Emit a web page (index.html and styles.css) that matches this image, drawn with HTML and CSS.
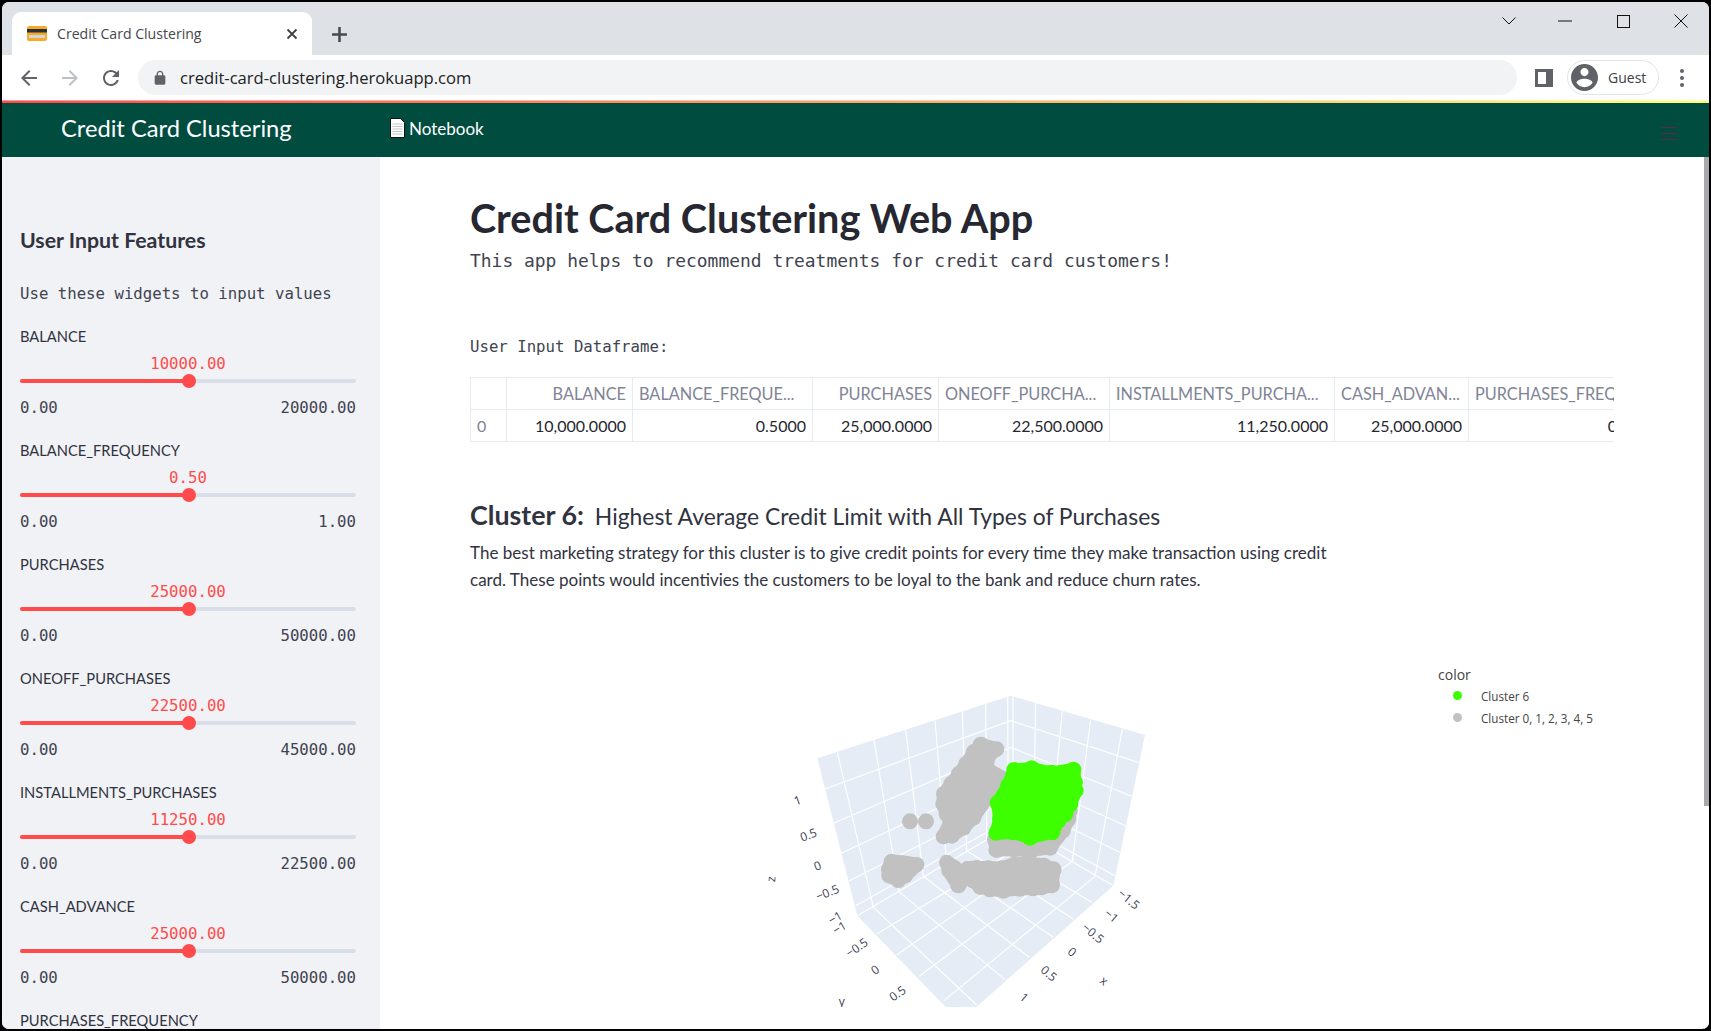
FILE: index.html
```html
<!DOCTYPE html>
<html lang="en">
<head>
<meta charset="utf-8">
<title>Credit Card Clustering</title>
<link rel="stylesheet" href="styles.css">
</head>
<body>
<div class="window">
  <div class="tabstrip">
    <div class="tab">
      <svg class="favicon" viewBox="0 0 20 15"><rect width="20" height="15" rx="2" fill="#f9a825"/><rect y="3" width="20" height="3.5" fill="#263238"/><rect x="2" y="9" width="16" height="3" fill="#cfd8dc"/></svg>
      <span class="tab-title">Credit Card Clustering</span>
      <svg class="tab-close" viewBox="0 0 12 12"><path d="M1.5 1.5l9 9M10.5 1.5l-9 9"/></svg>
    </div>
    <svg class="newtab" viewBox="0 0 16 16"><path d="M8 1v14M1 8h14"/></svg>
    <div class="win-controls">
      <div class="win-btn chev"><svg viewBox="0 0 14 8" width="14" height="8"><path d="M.5.5L7 7 13.5.5"/></svg></div>
      <div class="win-btn"><svg viewBox="0 0 14 2" width="14" height="2"><path d="M0 1h14"/></svg></div>
      <div class="win-btn"><svg viewBox="0 0 13 13" width="13" height="13"><rect x=".5" y=".5" width="12" height="12"/></svg></div>
      <div class="win-btn"><svg viewBox="0 0 14 14" width="14" height="14"><path d="M.5.5l13 13M13.5.5l-13 13"/></svg></div>
    </div>
  </div>

  <div class="toolbar">
    <svg class="nav-icon" viewBox="0 0 24 24"><path d="M20 11H7.83l5.59-5.59L12 4l-8 8 8 8 1.41-1.41L7.83 13H20v-2z"/></svg>
    <svg class="nav-icon nav-off" viewBox="0 0 24 24"><path d="M4 11h12.17l-5.59-5.59L12 4l8 8-8 8-1.41-1.41L16.17 13H4v-2z"/></svg>
    <svg class="nav-icon" viewBox="0 0 24 24"><path d="M17.65 6.35C16.2 4.9 14.21 4 12 4c-4.42 0-7.99 3.58-7.99 8s3.57 8 7.99 8c3.73 0 6.84-2.55 7.73-6h-2.08c-.82 2.33-3.04 4-5.65 4-3.31 0-6-2.69-6-6s2.69-6 6-6c1.66 0 3.14.69 4.22 1.78L13 11h7V4l-2.35 2.35z"/></svg>
    <div class="omnibox">
      <svg class="lock" viewBox="0 0 24 24"><path d="M18 8h-1V6c0-2.76-2.24-5-5-5S7 3.24 7 6v2H6c-1.1 0-2 .9-2 2v10c0 1.1.9 2 2 2h12c1.1 0 2-.9 2-2V10c0-1.1-.9-2-2-2zm-9-2c0-1.66 1.34-3 3-3s3 1.34 3 3v2H9V6z"/></svg>
      <span class="url">credit-card-clustering.herokuapp.com</span>
    </div>
    <svg class="side-icon" viewBox="0 0 18 18"><path fill-rule="evenodd" d="M0 0h18v18H0zM3 3v12h8V3z"/></svg>
    <div class="profile">
      <svg class="avatar" viewBox="2 2 20 20"><path d="M12 2C6.48 2 2 6.48 2 12s4.48 10 10 10 10-4.48 10-10S17.52 2 12 2zm0 3c1.66 0 3 1.34 3 3s-1.34 3-3 3-3-1.34-3-3 1.34-3 3-3zm0 14.2c-2.5 0-4.71-1.28-6-3.22.03-1.99 4-3.08 6-3.08 1.99 0 5.97 1.09 6 3.08-1.29 1.94-3.5 3.22-6 3.22z"/></svg>
      <span class="guest">Guest</span>
    </div>
    <svg class="kebab" viewBox="0 0 4 18"><circle cx="2" cy="2" r="2"/><circle cx="2" cy="9" r="2"/><circle cx="2" cy="16" r="2"/></svg>
  </div>

  <div class="stripe"></div>

  <nav class="navbar">
    <span class="brand">Credit Card Clustering</span>
    <a class="nav-link">
      <svg class="doc-icon" viewBox="0 0 15 20"><path d="M.5.5h10l4 4v15H.5z" fill="#fff" stroke="#111"/><path d="M2.5 6h10M2.5 8.5h10M2.5 11h10M2.5 13.5h10M2.5 16h10" stroke="#c4c4c4"/></svg>
      Notebook
    </a>
    <svg class="burger" viewBox="0 0 16 15"><path d="M0 1.5h16M0 7.5h16M0 13.5h16"/></svg>
  </nav>

  <div class="app">
    <aside class="sidebar">
      <h3 class="side-title">User Input Features</h3>
      <p class="side-note">Use these widgets to input values</p>

      <div class="slider">
        <div class="s-label">BALANCE</div>
        <div class="s-value">10000.00</div>
        <div class="s-track"><div class="s-fill"></div><div class="s-thumb"></div></div>
        <div class="s-ticks"><span>0.00</span><span>20000.00</span></div>
      </div>
      <div class="slider">
        <div class="s-label">BALANCE_FREQUENCY</div>
        <div class="s-value">0.50</div>
        <div class="s-track"><div class="s-fill"></div><div class="s-thumb"></div></div>
        <div class="s-ticks"><span>0.00</span><span>1.00</span></div>
      </div>
      <div class="slider">
        <div class="s-label">PURCHASES</div>
        <div class="s-value">25000.00</div>
        <div class="s-track"><div class="s-fill"></div><div class="s-thumb"></div></div>
        <div class="s-ticks"><span>0.00</span><span>50000.00</span></div>
      </div>
      <div class="slider">
        <div class="s-label">ONEOFF_PURCHASES</div>
        <div class="s-value">22500.00</div>
        <div class="s-track"><div class="s-fill"></div><div class="s-thumb"></div></div>
        <div class="s-ticks"><span>0.00</span><span>45000.00</span></div>
      </div>
      <div class="slider">
        <div class="s-label">INSTALLMENTS_PURCHASES</div>
        <div class="s-value">11250.00</div>
        <div class="s-track"><div class="s-fill"></div><div class="s-thumb"></div></div>
        <div class="s-ticks"><span>0.00</span><span>22500.00</span></div>
      </div>
      <div class="slider">
        <div class="s-label">CASH_ADVANCE</div>
        <div class="s-value">25000.00</div>
        <div class="s-track"><div class="s-fill"></div><div class="s-thumb"></div></div>
        <div class="s-ticks"><span>0.00</span><span>50000.00</span></div>
      </div>
      <div class="slider">
        <div class="s-label">PURCHASES_FREQUENCY</div>
      </div>
    </aside>

    <main class="main">
      <h1 class="page-title">Credit Card Clustering Web App</h1>
      <p class="subtitle">This app helps to recommend treatments for credit card customers!</p>
      <p class="df-label">User Input Dataframe:</p>

      <div class="table-wrap">
        <table class="df">
          <thead>
            <tr>
              <th class="c0"></th>
              <th class="c1 num">BALANCE</th>
              <th class="c2">BALANCE_FREQUE...</th>
              <th class="c3 num">PURCHASES</th>
              <th class="c4">ONEOFF_PURCHA...</th>
              <th class="c5">INSTALLMENTS_PURCHA...</th>
              <th class="c6">CASH_ADVAN...</th>
              <th class="c7">PURCHASES_FREQUENCY</th>
            </tr>
          </thead>
          <tbody>
            <tr>
              <th class="idx">0</th>
              <td>10,000.0000</td>
              <td>0.5000</td>
              <td>25,000.0000</td>
              <td>22,500.0000</td>
              <td>11,250.0000</td>
              <td>25,000.0000</td>
              <td>0.5000</td>
            </tr>
          </tbody>
        </table>
      </div>

      <h2 class="cluster"><strong>Cluster 6:</strong> <span>Highest Average Credit Limit with All Types of Purchases</span></h2>
      <p class="cluster-text">The best marketing strategy for this cluster is to give credit points for every time they make transaction using credit card. These points would incentivies the customers to be loyal to the bank and reduce churn rates.</p>

      <div class="plot">
        <div class="legend">
          <div class="legend-title">color</div>
          <div class="legend-item"><i class="dot dot-green"></i>Cluster 6</div>
          <div class="legend-item"><i class="dot dot-grey"></i>Cluster 0, 1, 2, 3, 4, 5</div>
        </div>
        <svg class="scene" viewBox="0 0 1320 984" width="440" height="328">
          <polygon class="wall" points="232,238 812,50 1215,168 1120,620 710,983 617,984 352,710"/>
          <path class="grid" d="M292,220L400,685M402,183L477,638M497,152L550,592M585,122L620,555M667,97L680,515M737,73L740,480M803,52L805,445M819,52L819,445
            M887,70L880,480M967,95L928,507M1052,122L997,547M1147,150L1065,592
            M255,330L812,125M282,432L812,205M305,522L812,285M328,605L812,360M347,680L812,420
            M812,125L1195,250M812,205L1175,352M812,285L1157,440M812,360L1140,520M812,420L1125,590
            M352,710L812,440L1120,620
            M410,765L880,480M470,828L928,507M538,892L997,547M612,965L1065,592
            M400,685L710,978M477,638L795,902M550,592L868,835M620,555L940,775M680,515L1000,720M740,480L1055,670"/>

          <g class="pts-grey">
            <polygon points="723,198 770,210 745,230 740,270 790,298 770,340 745,350 720,385 700,415 670,445 635,470 610,473 632,430 620,405 610,375 612,345 635,315 658,285 680,255 702,220"/>
            <circle cx="723" cy="198" r="25"/><circle cx="770" cy="210" r="23"/><circle cx="745" cy="230" r="24"/><circle cx="702" cy="220" r="25"/>
            <circle cx="680" cy="255" r="25"/><circle cx="658" cy="285" r="25"/><circle cx="635" cy="315" r="25"/><circle cx="612" cy="345" r="24"/>
            <circle cx="610" cy="375" r="24"/><circle cx="620" cy="405" r="24"/><circle cx="632" cy="430" r="25"/><circle cx="610" cy="473" r="23"/>
            <circle cx="635" cy="470" r="24"/><circle cx="670" cy="445" r="25"/><circle cx="700" cy="415" r="25"/><circle cx="720" cy="380" r="25"/>
            <circle cx="745" cy="340" r="25"/><circle cx="770" cy="298" r="25"/><circle cx="740" cy="270" r="25"/><circle cx="790" cy="318" r="25"/>

            <circle cx="510" cy="427" r="24"/><circle cx="558" cy="427" r="24"/>

            <polygon points="455,548 445,570 447,590 475,603 495,590 530,557 490,550"/>
            <circle cx="455" cy="548" r="24"/><circle cx="445" cy="570" r="22"/><circle cx="447" cy="590" r="23"/><circle cx="475" cy="603" r="24"/>
            <circle cx="495" cy="590" r="24"/><circle cx="490" cy="565" r="22"/><circle cx="530" cy="557" r="23"/>

            <polygon points="620,550 627,575 640,595 655,618 672,600 645,565"/>
            <circle cx="620" cy="550" r="23"/><circle cx="627" cy="575" r="23"/><circle cx="640" cy="595" r="20"/><circle cx="655" cy="618" r="25"/>

            <polygon points="682,568 710,566 745,568 785,568 825,555 860,552 912,560 940,572 935,618 905,625 880,628 840,628 790,634 750,630 722,623 700,605 690,585"/>
            <circle cx="682" cy="568" r="22"/><circle cx="710" cy="566" r="23"/><circle cx="745" cy="568" r="24"/><circle cx="785" cy="568" r="24"/>
            <circle cx="825" cy="555" r="23"/><circle cx="860" cy="552" r="23"/><circle cx="912" cy="560" r="24"/><circle cx="940" cy="572" r="25"/>
            <circle cx="935" cy="618" r="25"/><circle cx="905" cy="625" r="24"/><circle cx="880" cy="628" r="24"/><circle cx="840" cy="628" r="25"/>
            <circle cx="790" cy="634" r="25"/><circle cx="750" cy="630" r="25"/><circle cx="722" cy="623" r="25"/><circle cx="700" cy="605" r="24"/><circle cx="690" cy="585" r="23"/>

            <polygon points="765,482 900,400 988,395 985,420 968,455 930,505 880,512 822,510 770,512"/>
            <circle cx="770" cy="512" r="25"/><circle cx="765" cy="482" r="24"/><circle cx="822" cy="510" r="25"/><circle cx="880" cy="512" r="24"/><circle cx="930" cy="505" r="25"/>
            <circle cx="988" cy="395" r="25"/><circle cx="985" cy="420" r="24"/><circle cx="968" cy="455" r="24"/>
          </g>

          <g class="pts-green">
            <polygon points="822,272 875,270 935,282 1000,272 1005,310 1008,335 990,375 975,405 955,425 937,460 870,475 820,460 768,462 780,420 773,372 805,320"/>
            <circle cx="822" cy="272" r="23"/><circle cx="875" cy="270" r="26"/><circle cx="900" cy="280" r="24"/><circle cx="935" cy="282" r="25"/>
            <circle cx="965" cy="285" r="24"/><circle cx="1000" cy="272" r="24"/><circle cx="1005" cy="310" r="24"/><circle cx="1008" cy="335" r="23"/>
            <circle cx="990" cy="375" r="25"/><circle cx="975" cy="405" r="25"/><circle cx="955" cy="425" r="24"/><circle cx="937" cy="460" r="24"/>
            <circle cx="910" cy="450" r="24"/><circle cx="870" cy="475" r="25"/><circle cx="820" cy="460" r="24"/><circle cx="768" cy="462" r="23"/>
            <circle cx="780" cy="420" r="24"/><circle cx="773" cy="372" r="24"/><circle cx="805" cy="320" r="25"/>
          </g>

          <g class="axis">
            <text transform="translate(172,363) rotate(-20)">1</text>
            <text transform="translate(205,467) rotate(-20)">0.5</text>
            <text transform="translate(232,560) rotate(-20)">0</text>
            <text transform="translate(262,640) rotate(-22)">−0.5</text>
            <text transform="translate(285,716) rotate(-30)">−1</text>
            <text transform="translate(298,746) rotate(-30)">−1</text>
            <text transform="translate(350,805) rotate(-35)">−0.5</text>
            <text transform="translate(405,872) rotate(-35)">0</text>
            <text transform="translate(472,943) rotate(-35)">0.5</text>
            <text class="axis-name" transform="translate(92,600) rotate(-85)">z</text>
            <text class="axis-name" transform="translate(305,966)">y</text>
            <text transform="translate(1167,660) rotate(40)">−1.5</text>
            <text transform="translate(1115,710) rotate(40)">−1</text>
            <text transform="translate(1060,762) rotate(40)">−0.5</text>
            <text transform="translate(997,818) rotate(40)">0</text>
            <text transform="translate(927,883) rotate(40)">0.5</text>
            <text transform="translate(853,955) rotate(40)">1</text>
            <text class="axis-name" transform="translate(1093,905) rotate(40)">x</text>
          </g>
        </svg>
      </div>
    </main>

    <div class="scrollbar"><div class="scroll-thumb"></div></div>
  </div>
</div>
</body>
</html>
```

FILE: styles.css
```css
* { box-sizing: border-box; }
html, body { margin: 0; height: 100%; overflow: hidden; background: #000; }
body { font-family: "Lato", "Noto Sans", sans-serif; color: #31333f; }

.window {
  width: 1711px; height: 1031px;
  border: 2px solid #000; border-radius: 9px;
  overflow: hidden; background: #fff;
  display: flex; flex-direction: column;
}

/* browser chrome */
.tabstrip { height: 53px; flex: none; background: #dee1e6; display: flex; align-items: flex-end; padding-left: 10px; }
.tab { width: 300px; height: 43px; background: #fff; border-radius: 9px 9px 0 0; display: flex; align-items: center; padding: 0 14px 0 15px; }
.favicon { width: 20px; height: 15px; flex: none; margin-right: 10px; }
.tab-title { font: 14.1px "Open Sans", sans-serif; color: #45474b; flex: 1; }
.tab-close { width: 12px; height: 12px; fill: none; stroke: #3c4043; stroke-width: 1.8; }
.newtab { width: 17px; height: 17px; margin: 0 0 12px 19px; fill: none; stroke: #474a4e; stroke-width: 2.4; }
.win-controls { margin-left: auto; margin-right: -1px; height: 53px; align-self: flex-start; display: flex; }
.win-btn { width: 58px; height: 38px; display: flex; align-items: center; justify-content: center; }
.win-btn.chev { width: 54px; }
.win-btn svg { fill: none; stroke: #111; stroke-width: 1; }

.toolbar { height: 45px; flex: none; background: #fff; display: flex; align-items: center; padding-left: 15px; }
.nav-icon { width: 24px; height: 24px; fill: #5f6368; margin-right: 17px; flex: none; }
.nav-off { fill: #bdc1c6; }
.omnibox { width: 1379px; height: 35px; margin-left: -2px; border-radius: 18px; background: #f1f3f4; display: flex; align-items: center; padding-left: 14px; flex: none; }
.lock { width: 16px; height: 16px; fill: #5f6368; margin-right: 12px; }
.url { font: 16.6px "Open Sans", sans-serif; color: #202124; }
.side-icon { width: 18px; height: 18px; fill: #5f6368; margin-left: 18px; flex: none; }
.profile { width: 92px; height: 35px; margin-left: 14px; border: 1.5px solid #e3e4e6; border-radius: 18px; display: flex; align-items: center; padding-left: 3px; flex: none; }
.avatar { width: 27px; height: 27px; fill: #5f6368; flex: none; }
.guest { font: 14px "Open Sans", sans-serif; color: #3c4043; margin-left: 10px; }
.kebab { width: 4px; height: 18px; fill: #5f6368; margin-left: 21px; flex: none; }

.stripe { height: 3px; flex: none; background: linear-gradient(90deg, #ff4b4b, #fffd80); box-shadow: inset 0 1px 0 rgba(255, 255, 255, .45); }

/* app header */
.navbar { height: 54px; flex: none; background: #004d40; color: #fff; display: flex; align-items: center; padding-left: 59px; position: relative; }
.brand { font-size: 23.7px; width: 329px; margin-top: -4px; }
.nav-link { font-size: 17px; display: flex; align-items: center; gap: 4px; margin-top: -4px; }
.doc-icon { width: 15px; height: 20px; }
.burger { width: 16px; height: 15px; margin-left: auto; margin-right: 32px; margin-top: 7px; fill: none; stroke: #4a3346; stroke-width: 1.3; }

.app { flex: 1; min-height: 0; display: flex; }

/* sidebar */
.sidebar { width: 378px; flex: none; background: #f0f2f6; padding: 68px 24px 0 18px; overflow: hidden; }
.side-title { margin: 0; font-size: 21.3px; font-weight: 700; line-height: 30px; color: #31333f; }
.side-note { margin: 28px 0 21px; font: 15.7px/22px "DejaVu Sans Mono", monospace; color: #41434f; }
.slider { margin-bottom: 23px; }
.s-label { font-size: 14.7px; line-height: 20px; color: #31333f; }
.s-value { font: 15.7px/18px "DejaVu Sans Mono", monospace; color: #ff4b4b; text-align: center; margin-top: 9px; }
.s-track { height: 4px; margin-top: 6px; border-radius: 2px; background: #dadee9; position: relative; }
.s-fill { width: 50%; height: 100%; border-radius: 2px 0 0 2px; background: #ff4b4b; }
.s-thumb { position: absolute; left: 50%; top: 50%; width: 14px; height: 14px; margin: -7px 0 0 -6.5px; border-radius: 50%; background: #ff4b4b; }
.s-ticks { display: flex; justify-content: space-between; margin-top: 16px; font: 15.7px/18px "DejaVu Sans Mono", monospace; color: #41434f; }

/* main column */
.main { flex: 1; min-width: 0; padding: 31px 0 0 90px; overflow: hidden; }
.page-title { margin: 0; font-size: 39.6px; font-weight: 700; line-height: 60px; color: #262730; }
.subtitle { margin: 0; font: 17.95px/26px "DejaVu Sans Mono", monospace; color: #41434f; }
.df-label { margin: 62px 0 0; font: 15.7px/22px "DejaVu Sans Mono", monospace; color: #41434f; }

.table-wrap { width: 1144px; margin-top: 19px; overflow: hidden; }
.df { table-layout: fixed; width: 1194px; border-collapse: collapse; font-size: 16px; color: #262730; }
.df th, .df td { height: 32px; padding: 0 6px; border: 1px solid #e6eaf1; overflow: hidden; white-space: nowrap; text-align: right; font-weight: 400; }
.df thead th { color: #808495; text-align: left; font-size: 16.3px; }
.df thead th.num { text-align: right; }
.df .idx { text-align: left; color: #808495; }
.c0 { width: 36px; } .c1 { width: 126px; } .c2 { width: 180px; } .c3 { width: 126px; }
.c4 { width: 171px; } .c5 { width: 225px; } .c6 { width: 134px; } .c7 { width: 196px; }

.cluster { margin: 55px 0 0; line-height: 36px; font-weight: 400; display: flex; gap: 11px; align-items: baseline; color: #31333f; }
.cluster strong { font-size: 26.8px; font-weight: 700; }
.cluster span { font-size: 22.9px; }
.cluster-text { margin: 5px 0 0; width: 870px; font-size: 17.05px; line-height: 27px; color: #31333f; }

.plot { position: relative; margin-top: 46px; padding: 40px 0 0 270px; }
.scene { display: block; }
.wall { fill: #e5ecf6; }
.grid { fill: none; stroke: #fff; stroke-width: 3.5; }
.pts-grey { fill: #c1c1c1; stroke: none; }
.pts-green { fill: #3eff00; stroke: none; }
.pts-grey polygon { stroke: #c1c1c1; stroke-width: 42; stroke-linejoin: round; }
.pts-green polygon { stroke: #3eff00; stroke-width: 40; stroke-linejoin: round; }
.axis text { font: 36px "Open Sans", sans-serif; fill: #3b4256; text-anchor: middle; dominant-baseline: central; }

.legend { position: absolute; left: 968px; top: 25px; font-family: "Open Sans", sans-serif; color: #444; }
.legend-title { font-size: 14px; line-height: 21px; color: #444; }
.legend-item { position: relative; height: 22px; line-height: 22px; font-size: 11.7px; padding-left: 43px; color: #444; }
.dot { position: absolute; left: 15px; top: 6px; width: 9px; height: 9px; border-radius: 50%; }
.dot-green { background: #3eff00; }
.dot-grey { background: #c1c1c1; }

.scrollbar { width: 5px; flex: none; background: #fff; }
.scroll-thumb { height: 649px; background: #a9a9ad; }
```
